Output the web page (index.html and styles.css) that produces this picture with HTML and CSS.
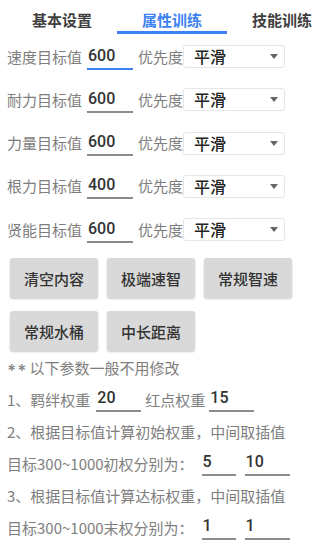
FILE: index.html
```html
<!DOCTYPE html>
<html lang="zh-CN">
<head>
<meta charset="utf-8">
<title>属性训练</title>
<link rel="stylesheet" href="styles.css">
</head>
<body>
<div class="app">
  <div class="tabs">
    <div class="tab">基本设置</div>
    <div class="tab active">属性训练</div>
    <div class="tab">技能训练</div>
  </div>

  <div class="targets">
    <div class="row">
      <span class="label">速度目标值</span>
      <span class="field focused">600</span>
      <span class="label prio">优先度</span>
      <div class="select"><span>平滑</span><svg class="arrow" width="8" height="5" viewBox="0 0 8 5"><path d="M0 0H8L4 5Z" fill="#666"/></svg></div>
    </div>
    <div class="row">
      <span class="label">耐力目标值</span>
      <span class="field">600</span>
      <span class="label prio">优先度</span>
      <div class="select"><span>平滑</span><svg class="arrow" width="8" height="5" viewBox="0 0 8 5"><path d="M0 0H8L4 5Z" fill="#666"/></svg></div>
    </div>
    <div class="row">
      <span class="label">力量目标值</span>
      <span class="field">600</span>
      <span class="label prio">优先度</span>
      <div class="select"><span>平滑</span><svg class="arrow" width="8" height="5" viewBox="0 0 8 5"><path d="M0 0H8L4 5Z" fill="#666"/></svg></div>
    </div>
    <div class="row">
      <span class="label">根力目标值</span>
      <span class="field">400</span>
      <span class="label prio">优先度</span>
      <div class="select"><span>平滑</span><svg class="arrow" width="8" height="5" viewBox="0 0 8 5"><path d="M0 0H8L4 5Z" fill="#666"/></svg></div>
    </div>
    <div class="row">
      <span class="label">贤能目标值</span>
      <span class="field">600</span>
      <span class="label prio">优先度</span>
      <div class="select"><span>平滑</span><svg class="arrow" width="8" height="5" viewBox="0 0 8 5"><path d="M0 0H8L4 5Z" fill="#666"/></svg></div>
    </div>
  </div>

  <div class="buttons">
    <button class="btn">清空内容</button>
    <button class="btn">极端速智</button>
    <button class="btn">常规智速</button>
    <button class="btn">常规水桶</button>
    <button class="btn">中长距离</button>
  </div>

  <div class="advanced">
    <div class="line"><span class="stars">∗∗</span>以下参数一般不用修改</div>
    <div class="line">
      <span>1、羁绊权重</span>
      <span class="field small f1">20</span>
      <span>红点权重</span>
      <span class="field small f2">15</span>
    </div>
    <div class="line">2、根据目标值计算初始权重，中间取插值</div>
    <div class="line">
      <span>目标300~1000初权分别为：</span>
      <span class="field small f3">5</span>
      <span class="field small f4">10</span>
    </div>
    <div class="line">3、根据目标值计算达标权重，中间取插值</div>
    <div class="line">
      <span>目标300~1000末权分别为：</span>
      <span class="field small f3">1</span>
      <span class="field small f4">1</span>
    </div>
  </div>
</div>
</body>
</html>
```

FILE: styles.css
```css
* { box-sizing: border-box; }

html, body {
  margin: 0;
  padding: 0;
  background: #ffffff;
}

body {
  font-family: "Noto Sans CJK SC", "Noto Sans", sans-serif;
  color: #7e7e7e;
  font-size: 15px;
  width: 330px;
  height: 547px;
  overflow: hidden;
}

.tabs {
  display: flex;
  padding-left: 7px;
  height: 35px;
  overflow: hidden;
}

.tab {
  flex: none;
  width: 110px;
  height: 34px;
  padding-top: 10px;
  line-height: 20px;
  text-align: center;
  font-size: 15px;
  font-weight: bold;
  color: #3f3f3f;
  border-bottom: 3px solid transparent;
}

.tab.active {
  color: #3c82f2;
  border-bottom-color: #3c82f2;
}

.targets {
  display: flex;
  flex-direction: column;
}

.row {
  display: flex;
  align-items: center;
  height: 43.25px;
  padding-left: 7px;
}

.label {
  font-size: 15px;
  line-height: 20px;
  color: #7e7e7e;
  white-space: nowrap;
}

.field {
  display: inline-block;
  width: 46px;
  height: 26px;
  margin-left: 5px;
  padding-left: 1px;
  line-height: 24px;
  font-size: 16px;
  font-weight: 500;
  color: #333333;
  border-bottom: 2px solid #8c8c8c;
  font-family: "Roboto", "Noto Sans", sans-serif;
}

.field.focused {
  border-bottom-color: #3c82f2;
}

.prio {
  margin-left: 5px;
}

.select {
  display: flex;
  align-items: center;
  justify-content: space-between;
  width: 102px;
  height: 23px;
  padding: 0 6px 0 10px;
  border: 1px solid #e6e6e6;
  border-radius: 3px;
  box-shadow: 0 0 1px rgba(0,0,0,0.05);
  font-size: 16px;
  line-height: 21px;
  color: #222222;
  font-weight: 500;
}

.arrow {
  display: block;
}

.buttons {
  display: grid;
  grid-template-columns: repeat(3, 88px);
  column-gap: 9px;
  row-gap: 13px;
  padding: 7px 0 0 10px;
}

.btn {
  height: 40px;
  border: none;
  border-radius: 3px;
  background: #d9d9d9;
  box-shadow: 0 1px 2px rgba(0,0,0,0.22);
  font-family: "Noto Sans CJK SC", "Noto Sans", sans-serif;
  font-size: 15px;
  font-weight: 500;
  color: #333333;
  padding: 0;
}

.advanced {
  display: flex;
  flex-direction: column;
}

.line {
  display: flex;
  align-items: center;
  height: 32px;
  padding-left: 7px;
  font-size: 15px;
  color: #7e7e7e;
  white-space: nowrap;
}

.stars {
  font-family: "DejaVu Sans", sans-serif;
  font-size: 11px;
  font-weight: bold;
  letter-spacing: 1px;
  margin-right: 2px;
  color: #8a8a8a;
}

.field.small {
  height: 26px;
  margin-top: 0;
}

.f1 { width: 45px; margin-left: 6px; margin-right: 4px; }
.f2 { width: 45px; margin-left: 4px; }
.f3 { width: 34px; margin-left: 8px; }
.f4 { width: 45px; margin-left: 9px; }
```
